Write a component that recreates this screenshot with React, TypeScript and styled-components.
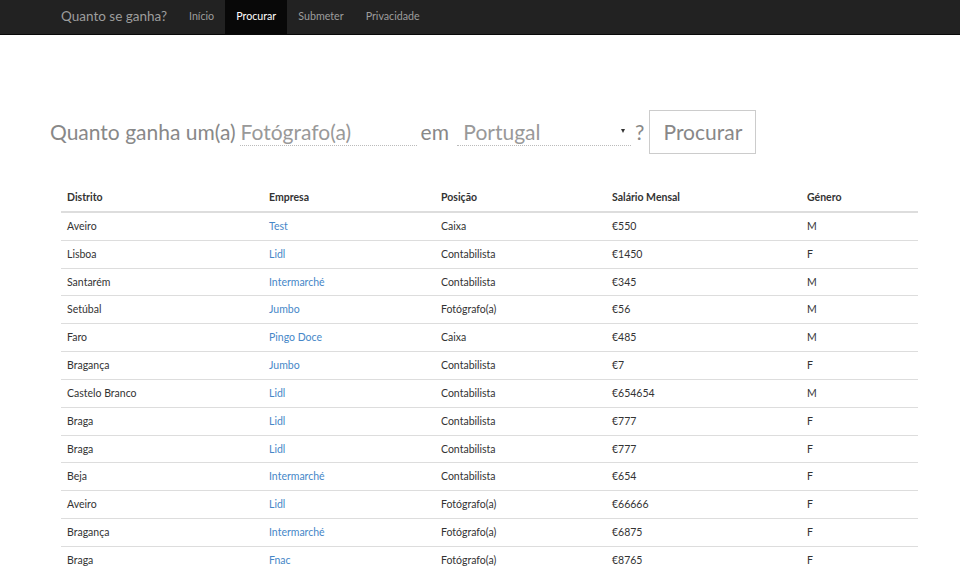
import React from "react";
import styled, { createGlobalStyle } from "styled-components";

const Global = createGlobalStyle`
  html, body { margin: 0; padding: 0; background: #fff; overflow: hidden; }
  body { font-family: Lato, "Open Sans", sans-serif; color: #333; font-size: 10.5px; }
  * { box-sizing: border-box; }
`;

const NavBar = styled.nav`
  height: 35px;
  background: #222;
  border-bottom: 1px solid #080808;
`;

const NavInner = styled.div`
  display: flex;
  align-items: stretch;
  height: 34px;
  padding-left: 61px;
`;

const Brand = styled.a`
  display: flex;
  align-items: center;
  font-size: 13.5px;
  color: #9d9d9d;
  text-decoration: none;
  margin-right: 11px;
  padding-bottom: 3px;
`;

const NavItem = styled.a<{ $active?: boolean }>`
  display: flex;
  align-items: center;
  padding: 0 11px 3px;
  font-size: 10.7px;
  color: ${(p) => (p.$active ? "#fff" : "#9d9d9d")};
  background: ${(p) => (p.$active ? "#080808" : "transparent")};
  text-decoration: none;
`;

const SearchRow = styled.form`
  display: flex;
  align-items: center;
  margin: 75px 0 0 50px;
  height: 44px;
  color: #888;
  font-size: 21px;
`;

const Label = styled.span<{ $ml?: number; $mr?: number }>`
  margin-left: ${(p) => p.$ml ?? 0}px;
  margin-right: ${(p) => p.$mr ?? 4}px;
  margin-top: -2px;
`;

const Field = styled.div<{ $w: number }>`
  width: ${(p) => p.$w}px;
  height: 26px;
  border-bottom: 1px dotted #bbb;
  display: flex;
  align-items: center;
  justify-content: space-between;
  color: #999;
  font-size: 21px;
  padding-left: 1px;
  margin-top: 2px;
`;

const FieldText = styled.span`
  margin-top: -2px;
`;

const Arrow = styled.span`
  width: 0;
  height: 0;
  border-left: 2.5px solid transparent;
  border-right: 2.5px solid transparent;
  border-top: 4px solid #333;
  margin-right: 6px;
  margin-bottom: 4px;
`;

const Button = styled.button`
  height: 44px;
  width: 107px;
  border: 1px solid #ccc;
  background: #fff;
  color: #888;
  font-family: Lato, sans-serif;
  font-size: 21px;
  margin-left: 5px;
  padding: 0 0 2px;
`;

const Table = styled.table`
  margin: 30px 0 0 61px;
  width: 857px;
  border-collapse: collapse;
  font-size: 10.5px;
  line-height: 14.85px;
`;

const Th = styled.th<{ $w: number }>`
  width: ${(p) => p.$w}px;
  text-align: left;
  font-weight: bold;
  padding: 6px 6px;
  border-bottom: 2px solid #ddd;
  color: #333;
`;

const Td = styled.td`
  padding: 6px 6px;
  border-top: 1px solid #ddd;
  color: #333;
`;

const Link = styled.a`
  color: #4687c8;
  text-decoration: none;
`;

const rows: [string, string, string, string, string][] = [
  ["Aveiro", "Test", "Caixa", "€550", "M"],
  ["Lisboa", "Lidl", "Contabilista", "€1450", "F"],
  ["Santarém", "Intermarché", "Contabilista", "€345", "M"],
  ["Setúbal", "Jumbo", "Fotógrafo(a)", "€56", "M"],
  ["Faro", "Pingo Doce", "Caixa", "€485", "M"],
  ["Bragança", "Jumbo", "Contabilista", "€7", "F"],
  ["Castelo Branco", "Lidl", "Contabilista", "€654654", "M"],
  ["Braga", "Lidl", "Contabilista", "€777", "F"],
  ["Braga", "Lidl", "Contabilista", "€777", "F"],
  ["Beja", "Intermarché", "Contabilista", "€654", "F"],
  ["Aveiro", "Lidl", "Fotógrafo(a)", "€66666", "F"],
  ["Bragança", "Intermarché", "Fotógrafo(a)", "€6875", "F"],
  ["Braga", "Fnac", "Fotógrafo(a)", "€8765", "F"],
];

export default function App() {
  return (
    <>
      <Global />
      <NavBar>
        <NavInner>
          <Brand href="#">Quanto se ganha?</Brand>
          <NavItem href="#">Início</NavItem>
          <NavItem href="#" $active>Procurar</NavItem>
          <NavItem href="#">Submeter</NavItem>
          <NavItem href="#">Privacidade</NavItem>
        </NavInner>
      </NavBar>
      <SearchRow onSubmit={(e) => e.preventDefault()}>
        <Label>Quanto ganha um(a)</Label>
        <Field $w={177}><FieldText>Fotógrafo(a)</FieldText></Field>
        <Label $ml={4} $mr={8}>em</Label>
        <Field $w={174}>
          <FieldText>&nbsp;Portugal</FieldText>
          <Arrow />
        </Field>
        <Label $ml={4} $mr={0}>?</Label>
        <Button type="submit">Procurar</Button>
      </SearchRow>
      <Table>
        <thead>
          <tr>
            <Th $w={202}>Distrito</Th>
            <Th $w={172}>Empresa</Th>
            <Th $w={171}>Posição</Th>
            <Th $w={195}>Salário Mensal</Th>
            <Th $w={117}>Género</Th>
          </tr>
        </thead>
        <tbody>
          {rows.map((r, i) => (
            <tr key={i}>
              <Td>{r[0]}</Td>
              <Td><Link href="#">{r[1]}</Link></Td>
              <Td>{r[2]}</Td>
              <Td>{r[3]}</Td>
              <Td>{r[4]}</Td>
            </tr>
          ))}
        </tbody>
      </Table>
    </>
  );
}
